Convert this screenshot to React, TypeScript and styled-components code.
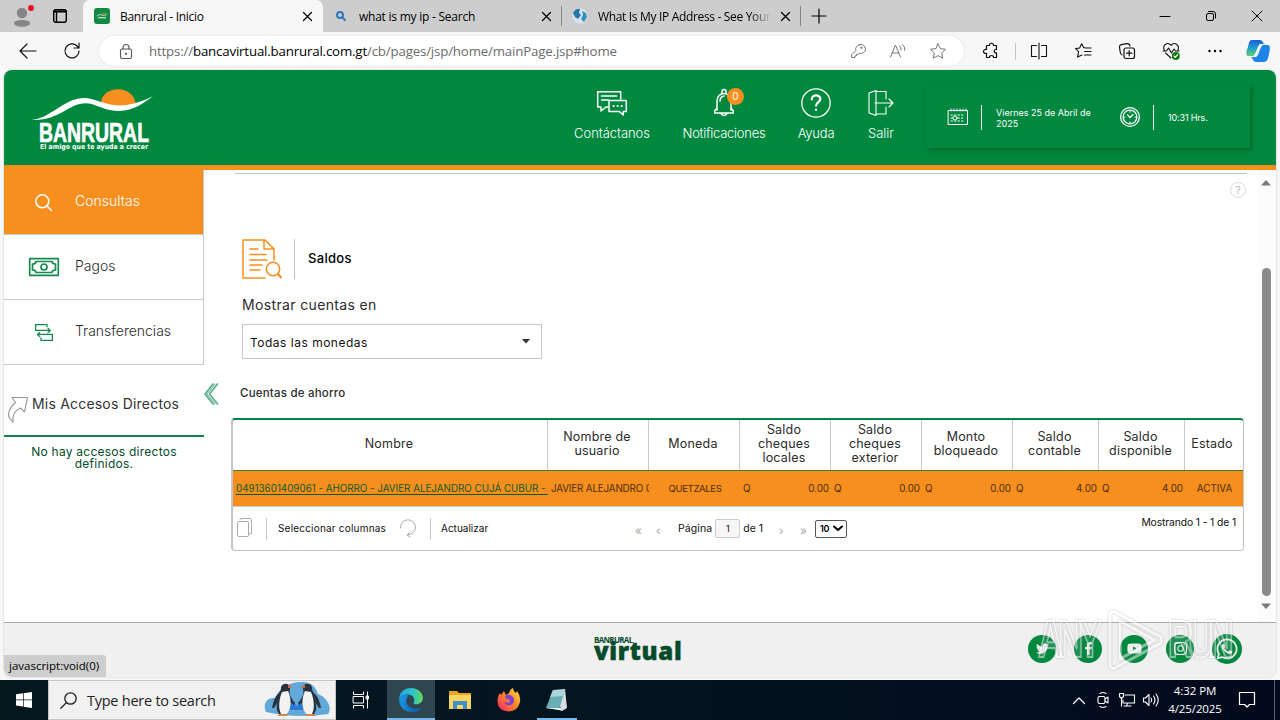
import React from "react";
import styled, { createGlobalStyle, css } from "styled-components";
import { FaTwitter, FaFacebookF, FaYoutube, FaInstagram, FaWhatsapp } from "react-icons/fa";

const green = "#00883f";
const orange = "#f78f1e";
const ui = `"Open Sans", "Noto Sans", sans-serif`;
const web = `Inter, "Open Sans", sans-serif`;

const Global = createGlobalStyle`
  * { box-sizing: border-box; }
  body { margin: 0; background: #f7f7f7; }
  svg { display: block; flex: none; }
`;

const Text = styled.span<{ $s: number; $w?: number; $ls?: number; $c?: string }>`
  font-size: ${(p) => p.$s}px;
  font-weight: ${(p) => p.$w ?? 400};
  letter-spacing: ${(p) => p.$ls ?? 0}px;
  ${(p) => p.$c && css`color: ${p.$c};`}
  white-space: nowrap;
`;

const Line = styled.svg`
  fill: none;
  stroke: currentColor;
  stroke-linecap: round;
  stroke-linejoin: round;
  overflow: visible;
`;

const Desktop = styled.div`
  width: 1280px;
  height: 720px;
  display: flex;
  flex-direction: column;
  overflow: hidden;
  background: #f7f7f7;
  font-family: ${ui};
  color: #111;
`;

/* Browser chrome */
const TabBar = styled.div`
  height: 32px;
  display: flex;
  background: #cdcdcd;
  color: #000;
`;
const Profile = styled.div`
  width: 83px;
  display: flex;
  align-items: center;
  gap: 18px;
  padding-left: 13px;
  border-radius: 0 0 7px 0;
`;
const Tab = styled.div<{ $active?: boolean; $w: number; $pad: number; $gap?: number }>`
  width: ${(p) => p.$w}px;
  height: 32px;
  padding: 0 ${(p) => (p.$active ? 11 : 10)}px 0 ${(p) => p.$pad}px;
  display: flex;
  align-items: center;
  gap: ${(p) => p.$gap ?? 10}px;
  background: ${(p) => (p.$active ? "#f7f7f7" : "#cdcdcd")};
  border-left: ${(p) => (p.$active ? "1px solid #f7f7f7" : "0")};
  border-radius: ${(p) => (p.$active ? "7px 7px 0 0" : "0 0 0 6px")};
`;
const TabTitle = styled(Text)<{ $fade?: boolean }>`
  flex: 1;
  overflow: hidden;
  ${(p) => p.$fade && css`mask-image: linear-gradient(90deg, #000 88%, transparent);`}
`;
const TabDivider = styled.div`
  width: 1px;
  height: 20px;
  margin-top: 6px;
  background: #858585;
`;
const NewTab = styled.div`
  width: 35px;
  display: grid;
  place-items: center;
`;
const WindowButtons = styled.div`
  margin-left: auto;
  display: grid;
  grid-template-columns: repeat(3, 46px);
  place-items: center;
`;
const Toolbar = styled.div`
  height: 38px;
  display: flex;
  align-items: center;
  padding-left: 6px;
`;
const Slot = styled.div<{ $w?: number; $c?: string }>`
  width: ${(p) => p.$w ?? 44}px;
  display: flex;
  justify-content: center;
  align-items: center;
  flex: none;
  color: ${(p) => p.$c ?? "inherit"};
`;
const Omnibox = styled.div`
  width: 865px;
  height: 30px;
  margin: 0 5px;
  padding: 0 6px 0 15px;
  display: flex;
  align-items: center;
  border-radius: 15px;
  background: #fff;
  box-shadow: 0 0 2px #d8d8d8;
`;
const Url = styled(Text)`
  flex: 1;
  margin-left: 11px;
  color: #6b6b6b;
  b { font-weight: 400; color: #000; }
`;
const ToolDivider = styled.div`
  width: 1px;
  height: 17px;
  margin: 0 1px 0 2px;
  background: #c4c4c4;
`;

/* Banking page */
const Page = styled.div`
  position: relative;
  height: 607px;
  margin: 0 4px 3px;
  display: flex;
  flex-direction: column;
  border-radius: 8px;
  overflow: hidden;
  background: #fff;
  box-shadow: 0 0 2px #bbb;
  font-family: ${web};
  color: #2b2b2b;
`;
const Header = styled.header`
  height: 100px;
  display: flex;
  flex: none;
  background: ${green};
  border-bottom: 5px solid ${orange};
  color: #fff;
`;
const Brand = styled.div`
  width: 557px;
  padding: 16px 0 0 26px;
`;
const NavItem = styled.div<{ $w: number }>`
  position: relative;
  width: ${(p) => p.$w}px;
  padding-top: 17px;
  display: flex;
  flex-direction: column;
  align-items: center;
  gap: 5px;
  line-height: 18px;
`;
const NavIcon = styled.div`
  position: relative;
  height: 32px;
  display: grid;
  place-items: center;
`;
const Badge = styled.span`
  position: absolute;
  left: 13px;
  top: 1px;
  width: 17px;
  height: 17px;
  border-radius: 50%;
  background: ${orange};
  font-size: 10px;
  line-height: 17px;
  text-align: center;
`;
const Clock = styled.div`
  width: 324px;
  height: 62px;
  margin: 16px 26px 0 auto;
  padding-left: 22px;
  display: flex;
  align-items: center;
  box-shadow: 2px 2px 4px rgba(0, 60, 25, 0.45);
  line-height: 11px;
`;
const ClockRule = styled.div`
  width: 1px;
  height: 25px;
  margin: 0 14px 0 13px;
  background: #e8f5ee;
`;
const DateText = styled.div`
  width: 124px;
  padding-top: 2px;
  font-size: 9px;
`;
const Body = styled.div`
  height: 452px;
  display: flex;
`;
const Sidebar = styled.aside`
  width: 200px;
  flex: none;
`;
const MenuItem = styled.div<{ $active?: boolean }>`
  height: 65px;
  display: flex;
  align-items: center;
  background: ${(p) => (p.$active ? orange : "#fff")};
  color: ${(p) => (p.$active ? "#fff" : "#2b2b2b")};
  border-right: 1px solid #c9c9c9;
  border-bottom: 1px solid #c9c9c9;
  padding-bottom: 3px;
`;
const MenuIcon = styled.div<{ $active?: boolean }>`
  width: 71px;
  padding: 3px 0 0 8px;
  display: grid;
  place-items: center;
  color: ${(p) => (p.$active ? "#fff" : "#17894c")};
`;
const Shortcuts = styled.div`
  height: 72px;
  display: flex;
  align-items: center;
  gap: 3px;
  padding: 6px 0 0 3px;
  border-bottom: 2px solid #12824a;
  color: #999;
  svg { margin-top: 14px; }
`;
const EmptyNote = styled.div`
  padding-top: 8px;
  text-align: center;
  line-height: 11px;
  color: #064a2c;
`;
const Collapse = styled.div`
  width: 14px;
  padding-top: 213px;
  color: #5eb08a;
`;
const Main = styled.main`
  width: 1040px;
  padding-left: 13px;
`;
const TopRule = styled.div`
  height: 4px;
  margin: 0 11px 0 4px;
  border-bottom: 1px solid #b9c9c4;
`;
const HelpRow = styled.div`
  height: 65px;
  padding: 8px 12px 0 0;
  display: flex;
  justify-content: flex-end;
`;
const Help = styled.div`
  width: 16px;
  height: 16px;
  border: 1px solid #ddd;
  border-radius: 50%;
  text-align: center;
  font-size: 11px;
  line-height: 14px;
  color: #bbb;
`;
const TitleRow = styled.div`
  height: 40px;
  padding-left: 11px;
  display: flex;
  align-items: center;
  color: ${orange};
  span { margin-bottom: 2px; }
`;
const TitleRule = styled.div`
  width: 1px;
  height: 40px;
  margin: 0 13px 0 11px;
  background: #c4c4c4;
`;
const FieldLabel = styled.div`
  padding: 15px 0 0 11px;
  height: 45px;
  line-height: 20px;
`;
const Select = styled.div`
  width: 300px;
  height: 35px;
  margin-left: 11px;
  padding: 0 11px 0 7px;
  display: flex;
  align-items: center;
  justify-content: space-between;
  border: 1px solid #c6c6c6;
  color: #111;
  span { padding-top: 2px; }
`;
const SectionLabel = styled.div`
  height: 59px;
  padding: 22px 0 0 9px;
  line-height: 20px;
`;
const Table = styled.div`
  width: 1013px;
  height: 133px;
  border: 2px solid #c3c3c3;
  border-top-color: #08834a;
  border-bottom-width: 1px;
  border-left-width: 2px;
  border-right-width: 1px;
  border-radius: 4px;
`;
const Row = styled.div`
  display: grid;
  grid-template-columns: 315px 101px repeat(4, 91px) 86px 86px 58px;
`;
const HeadRow = styled(Row)`
  height: 51px;
  border-bottom: 1px solid #3b7d2c;
`;
const HeadCell = styled.div`
  display: flex;
  align-items: center;
  justify-content: center;
  padding: 0 4px 2px 2px;
  text-align: center;
  line-height: 14px;
  border-right: 1px solid #cacaca;
  &:last-child { border-right: 0; padding-right: 6px; }
  span { white-space: pre-line; }
`;
const DataRow = styled(Row)`
  height: 36px;
  background: ${orange};
  border-bottom: 1px solid #c9c9c9;
  color: #4a2d0a;
  line-height: 36px;
`;
const DataCell = styled.div<{ $align?: string }>`
  padding: 0 2px 0 3px;
  overflow: hidden;
  white-space: nowrap;
  display: flex;
  justify-content: ${(p) => p.$align ?? "flex-start"};
`;
const AccountLink = styled(Text)`
  color: #0b5a2b;
  text-decoration: underline;
  text-underline-offset: 2px;
`;
const TableFoot = styled.div`
  height: 43px;
  display: flex;
  align-items: center;
  padding-left: 4px;
  color: #111;
`;
const FootRule = styled.div`
  width: 1px;
  height: 22px;
  background: #c9c9c9;
`;
const FootTool = styled.div<{ $w: number }>`
  width: ${(p) => p.$w}px;
  padding-bottom: 2px;
  color: #aaa;
`;
const FootText = styled.div<{ $w: number; $pad: number }>`
  width: ${(p) => p.$w}px;
  padding: 0 0 5px ${(p) => p.$pad}px;
`;
const Pager = styled.div`
  display: flex;
  align-items: center;
  margin-left: 99px;
`;
const Arrow = styled.div<{ $w: number }>`
  width: ${(p) => p.$w}px;
  color: #aaa;
`;
const PageBox = styled.div`
  width: 25px;
  height: 19px;
  margin: 0 3px;
  border: 1px solid #ccc;
  border-radius: 2px;
  background: #f6f6f6;
  font-size: 9px;
  line-height: 17px;
  text-align: center;
`;
const PageSize = styled.div`
  width: 32px;
  height: 18px;
  padding: 0 4px;
  display: flex;
  align-items: center;
  justify-content: space-between;
  border: 1px solid #555;
  border-radius: 2px;
  color: #000;
`;
const Showing = styled.div`
  margin: 0 7px 17px auto;
`;
const Scroll = styled.div`
  width: 18px;
  margin-left: auto;
  padding: 10px 2px 12px 0;
  display: flex;
  flex-direction: column;
  align-items: center;
  background: #fcfcfc;
  color: #7a7a7a;
`;
const Thumb = styled.div`
  width: 9px;
  height: 328px;
  margin: 82px 0 7px;
  border-radius: 5px;
  background: #8a8a8a;
`;
const Footer = styled.footer`
  height: 55px;
  display: flex;
  border-top: 1px solid #aaa;
  background: #f0f0f0;
`;
const VirtualLogo = styled.div`
  width: 434px;
  padding: 12px 0 0 590px;
  box-sizing: content-box;
  display: flex;
  flex-direction: column;
  font-family: "Open Sans", sans-serif;
  color: #064a2c;
`;
const LogoSmall = styled(Text)`
  line-height: 9px;
  height: 7px;
`;
const LogoBig = styled(Text)`
  line-height: 18px;
  -webkit-text-stroke: 0.5px #064a2c;
`;
const Social = styled.div`
  display: flex;
  align-items: center;
  gap: 18px;
  height: 51px;
`;
const SocialButton = styled.div<{ $d?: number }>`
  width: ${(p) => p.$d ?? 28}px;
  height: ${(p) => p.$d ?? 28}px;
  display: grid;
  place-items: center;
  border-radius: 50%;
  background: ${green};
  color: #f1f1f1;
`;
const StatusBubble = styled.div`
  position: absolute;
  left: 0;
  bottom: 0;
  width: 102px;
  height: 22px;
  padding-left: 5px;
  border-radius: 0 3px 0 8px;
  background: #cdcdcd;
  line-height: 19px;
  font-family: ${ui};
  color: #000;
`;
const Watermark = styled.div`
  position: absolute;
  left: 1034px;
  top: 539px;
  display: flex;
  align-items: center;
  gap: 4px;
  opacity: 0.5;
  filter: drop-shadow(0 0 1px #888);
`;
const MarkWord = styled.span<{ $w: number }>`
  width: ${(p) => p.$w}px;
  font: 700 51px/60px "Liberation Sans", sans-serif;
  letter-spacing: -7px;
  transform: scaleX(0.68);
  transform-origin: left;
  color: rgba(245, 245, 245, 0.15);
  -webkit-text-stroke: 2px #fff;
`;

/* Windows taskbar */
const Taskbar = styled.div`
  height: 40px;
  display: flex;
  background: linear-gradient(90deg, #04181e, #041420 45%, #020a1c);
  color: #fff;
`;
const TaskButton = styled.div<{ $w: number; $active?: boolean; $open?: boolean }>`
  width: ${(p) => p.$w}px;
  height: 40px;
  display: grid;
  place-items: center;
  background: ${(p) => (p.$active ? "#30464e" : "transparent")};
  ${(p) => (p.$active || p.$open) && css`
    background-image: linear-gradient(#76b9ed, #76b9ed);
    background-repeat: no-repeat;
    background-position: center bottom;
    background-size: ${p.$active ? 48 : 40}px 2px;
  `}
`;
const SearchBox = styled.div`
  width: 288px;
  display: flex;
  align-items: center;
  justify-content: space-between;
  padding: 0 5px 0 11px;
  background: #f1f1f1;
  border: 1px solid #c4c4c4;
  color: #222;
`;
const SearchHint = styled.div`
  display: flex;
  align-items: center;
  gap: 10px;
`;
const Tray = styled.div`
  margin-left: auto;
  padding-right: 5px;
  display: flex;
  align-items: center;
`;
const TrayClock = styled.div`
  width: 64px;
  display: flex;
  flex-direction: column;
  align-items: center;
  line-height: 18px;
`;
const TrayEdge = styled.div`
  width: 1px;
  height: 40px;
  background: #56616b;
`;

const Close = () => (
  <Line width="9" height="9" viewBox="0 0 9 9" strokeWidth="1.2"><path d="M.5.5l8 8M8.5.5l-8 8" /></Line>
);

const BanruralLogo = () => (
  <svg width="124" height="66" viewBox="0 0 124 66">
    <path d="M71 17C72-1 104-2 106 19q-15 7-35-2z" fill={orange} />
    <path d="M1 34C20 33 34 12 54 12c17 0 30 18 69-2-24 20-41 16-56 10C42 9 34 36 1 34z" fill="#fff" />
    <text x="9" y="56" textLength="110" lengthAdjust="spacingAndGlyphs" fontFamily="Liberation Sans" fontWeight="700" fontSize="27" fill="#fff" stroke="#fff" strokeWidth=".7">BANRURAL</text>
    <text x="10" y="63" textLength="108" lengthAdjust="spacingAndGlyphs" fontFamily="DejaVu Sans" fontWeight="700" fontSize="7" fill="#fff">El amigo que te ayuda a crecer</text>
  </svg>
);

const Penguin = () => (
  <>
    <path d="M17 6c2-5 9-4 9 1 0 3-1 4 0 7 2 4 3 6 5 8l-1 2-5-4c1 6 0 12-3 14h-6c-4-4-4-9-2-13l-4 6-2 0c1-6 3-11 6-14 3-3 3-5 3-7z" fill="#28333e" />
    <path d="M18 11l6-1c4 8 3 18-1 23h-6c-3-6-2-15 1-22z" fill="#f2f2f2" />
    <path d="M24 4l5 2-5 1z" fill="#e8683a" />
    <path d="M13 35h11l-2-2h-6z" fill="#dd8448" />
  </>
);

const Penguins = () => (
  <svg width="66" height="38" viewBox="0 0 66 38">
    <path d="M2 31c-4-9 2-15 9-14C16 5 29 0 39 1c8 0 13 5 15 12 11 4 14 16 10 20Q33 38 2 31z" fill="#62a8d9" />
    <path d="M26 19l7 6 6-6v10H26z" fill="#2c78d3" />
    <Penguin />
    <g transform="matrix(-1 0 0 1 65 0)"><Penguin /></g>
  </svg>
);

const EdgeLogo = () => (
  <svg width="26" height="26" viewBox="0 0 24 24">
    <defs>
      <linearGradient id="edgeTop" x1="0" x2="1"><stop offset="0" stopColor="#24a7e8" /><stop offset=".6" stopColor="#2fc4c8" /><stop offset="1" stopColor="#63dc50" /></linearGradient>
      <linearGradient id="edgeLow" x1="0" x2="1" y1="0" y2="1"><stop offset="0" stopColor="#1b93dc" /><stop offset="1" stopColor="#0b55a8" /></linearGradient>
    </defs>
    <path d="M1 12C1 5 6 1 12 1c7 0 11 5 11 9 0 4-3 6-6 6-4 0-2-2-2-4 0-3-3-5-6-5-4 0-7 2-8 5z" fill="url(#edgeTop)" />
    <path d="M1 12c0-4 5-6 9-4-3 1-4 4-4 6 0 5 4 9 9 9C8 24 1 19 1 12z" fill="#168ddc" />
    <path d="M10 8c-4 3-3 9 2 11 4 2 8 1 10-1-2 4-6 6-9 5-5-1-8-5-8-9 0-3 2-5 5-6z" fill="url(#edgeLow)" />
  </svg>
);

const columns = ["Nombre", "Nombre de\nusuario", "Moneda", "Saldo\ncheques\nlocales", "Saldo\ncheques\nexterior", "Monto\nbloqueado", "Saldo\ncontable", "Saldo\ndisponible", "Estado"];
const amounts = ["0.00", "0.00", "0.00", "4.00", "4.00"];

function BrowserTabs() {
  return (
    <TabBar>
      <Profile>
        <svg width="22" height="24" viewBox="0 0 22 24">
          <circle cx="9" cy="9" r="5.2" fill="#858585" />
          <path d="M1 19c0-4 16-4 16 0 0 5-16 5-16 0z" fill="#858585" />
          <circle cx="18" cy="4" r="3" fill="#e81123" />
        </svg>
        <Line width="14" height="14" viewBox="0 0 14 14" strokeWidth="1.4"><rect x=".7" y=".7" width="12.6" height="12.6" rx="2" /><path d="M1 2.500h12" strokeWidth="2" /><path d="M3.500 3v10" /></Line>
      </Profile>
      <Tab $active $w={240} $pad={10}>
        <svg width="16" height="16" viewBox="0 0 16 16"><rect width="16" height="16" rx="3" fill="#128a43" /><path d="M3 8q3-2.500 5-1t5-1" stroke="#fff" strokeWidth=".7" fill="none" /><path d="M8 6.300q2-2 4 0z" fill={orange} /><path d="M4 9.700h8" stroke="#c6e2ce" strokeWidth="1.300" /></svg>
        <TabTitle $s={12} $ls={-0.28}>Banrural - Inicio</TabTitle>
        <Close />
      </Tab>
      <Tab $w={238} $pad={13} $gap={13}>
        <Line width="10" height="10" viewBox="0 0 10 10" strokeWidth="2" color="#2f79bd"><circle cx="4" cy="4" r="3" /><path d="M6.4 6.4L9 9" /></Line>
        <TabTitle $s={12} $ls={-0.24}>what is my ip - Search</TabTitle>
        <Close />
      </Tab>
      <TabDivider />
      <Tab $w={238} $pad={10}>
        <svg width="16" height="16" viewBox="0 0 16 16"><circle cx="8" cy="8" r="7.5" fill="#d9e6ee" /><path d="M1 5q3-5 7-4l-1 4 2 2-3 4-3-2z" fill="#2478a9" /><path d="M10 3l4 2 1 4-3 5-3-3 2-4z" fill="#3391bd" /></svg>
        <TabTitle $s={12} $ls={-0.33} $fade>What Is My IP Address - See Your</TabTitle>
        <Close />
      </Tab>
      <TabDivider />
      <NewTab><Line width="14" height="14" viewBox="0 0 14 14" strokeWidth="1.2"><path d="M7 0v14M0 7h14" /></Line></NewTab>
      <WindowButtons>
        <Line width="10" height="10" viewBox="0 0 10 10"><path d="M0 5.5h10" /></Line>
        <Line width="10" height="10" viewBox="0 0 10 10"><rect x=".5" y="2.5" width="7" height="7" rx="1.5" /><path d="M2.5.5H7a2.500 2.500 0 0 1 2.500 2.500V7" /></Line>
        <Line width="10" height="10" viewBox="0 0 10 10"><path d="M0 0l10 10M10 0L0 10" /></Line>
      </WindowButtons>
    </TabBar>
  );
}

function BrowserToolbar() {
  return (
    <Toolbar>
      <Slot><Line width="16" height="14" viewBox="0 0 16 14" strokeWidth="1.2"><path d="M16 7H0M7 0L0 7l7 7" /></Line></Slot>
      <Slot><Line width="16" height="16" viewBox="0 0 16 16" strokeWidth="1.2"><path d="M15 8a7 7 0 1 1-2-5l2 2M15 0v5h-5" /></Line></Slot>
      <Omnibox>
        <Slot $w={24} $c="#555"><Line width="12" height="15" viewBox="0 0 12 15" strokeWidth="1.1"><rect x=".5" y="5" width="11" height="9.500" rx="1.500" /><path d="M3 5V3.500a3 3 0 0 1 6 0V5" /><circle cx="6" cy="9.800" r=".6" fill="currentColor" /></Line></Slot>
        <Url $s={13.300} $ls={-0.18}>https://<b>bancavirtual.banrural.com.gt</b>/cb/pages/jsp/home/mainPage.jsp#home</Url>
        <Slot $w={40} $c="#777"><Line width="14" height="14" viewBox="0 0 14 14"><path d="M8.500.600a4.600 4.600 0 1 1-.2 8.700l-1.300 1H5.500v1.500H4v1.600H.6v-2.600l4.200-4.300A4.600 4.600 0 0 1 8.500.6z" /><circle cx="10.300" cy="3.800" r=".7" /></Line></Slot>
        <Slot $w={40} $c="#777"><Line width="16" height="14" viewBox="0 0 16 14"><path d="M.5 13L5.500 1l5 12M2.200 9h6.600M9.500 2q2 1.500 1.600 4M12.500.500q2.800 2 2.400 6" /></Line></Slot>
        <Slot $w={40} $c="#777"><Line width="16" height="16" viewBox="0 0 16 16"><path d="M8 .8l2.300 4.800 5.200.7-3.800 3.600.9 5.200L8 12.600l-4.600 2.500.9-5.200L.5 6.300l5.200-.7z" /></Line></Slot>
      </Omnibox>
      <Slot><Line width="16" height="16" viewBox="0 0 16 16" strokeWidth="1.200"><path d="M3.500 2.500h3c-.4-3 4.400-3 4 0h3v4c-3-.5-3 3.800 0 3.300v4.700h-3c.4-2.700-4.400-2.700-4 0h-3v-4.200c-4 .8-4-4.600 0-3.800z" /></Line></Slot>
      <ToolDivider />
      <Slot><Line width="16" height="16" viewBox="0 0 16 16" strokeWidth="1.100"><path d="M5.500 2.500h-5v11h5M10.500 2.500h5v11h-5M8 0v16" /></Line></Slot>
      <Slot><Line width="17" height="16" viewBox="0 0 17 16" strokeWidth="1.100"><path d="M10 4.800L8.600 4.600 6.700.8 4.600 5l-4 .6 3 3-1 5.500L7 12M10.500 5H16M9.500 8.500H16M9.500 12H16" /></Line></Slot>
      <Slot><Line width="16" height="16" viewBox="0 0 16 16" strokeWidth="1.200"><rect x="5" y="5" width="10.500" height="10.500" rx="2" /><path d="M10.200 7.500v5.500M7.500 10.200H13M3 12Q1.500 11.500 1.200 9L.5 4Q.4 2.200 2.200 1.700L8 .6Q10.500.4 11 3" /></Line></Slot>
      <Slot><Line width="17" height="17" viewBox="0 0 17 17" strokeWidth="1.100"><path d="M1.300 7C-1 1.500 5-1.500 8 2.400c3-4 9-.8 7 4.600M0 8h3.500L5.500 5l3 5L11 6l1.500 2H16M2.500 10L8 15" /><circle cx="12.800" cy="13" r="4" fill="#107c10" stroke="none" /><path d="M11 13l1.300 1.300 2.400-2.600" stroke="#fff" /></Line></Slot>
      <Slot><svg width="14" height="4" viewBox="0 0 14 4"><circle cx="1.500" cy="2" r="1.200" /><circle cx="7" cy="2" r="1.200" /><circle cx="12.500" cy="2" r="1.200" /></svg></Slot>
      <Slot $w={42}>
        <svg width="24" height="22" viewBox="0 0 24 22">
          <defs><linearGradient id="cop" x2="0" y2="1"><stop stopColor="#1c5fd0" /><stop offset=".5" stopColor="#1d9fd0" /><stop offset="1" stopColor="#64d06a" /></linearGradient></defs>
          <path d="M6 0h8c3 0 3 4 5 4h-5c-3 2-4 11-7 12H3c-4 0-3-4-1-9 1-4 1-7 4-7z" fill="url(#cop)" />
          <path d="M18 22h-8c-3 0-3-4-5-5h5c3-1 4-11 7-12h4c4 0 3 4 2 9s-2 8-5 8z" fill="#1e83ea" />
        </svg>
      </Slot>
    </Toolbar>
  );
}

function BankHeader() {
  return (
    <Header>
      <Brand><BanruralLogo /></Brand>
      <NavItem $w={102}>
        <NavIcon><Line width="30" height="25" viewBox="0 0 30 25" strokeWidth="1.500"><path d="M11 16H9l-5 4v-4H.7V.700h23V8M4.500 5h15M4.500 9h7" /><path d="M12 9.500h17.300v11h-3v3.500l-4-3.500H12z" /><path d="M16.500 15h.3M20.500 15h.3M24.500 15h.3" strokeWidth="1.800" /></Line></NavIcon>
        <Text $s={13} $w={300} $ls={-0.05}>Contáctanos</Text>
      </NavItem>
      <NavItem $w={122}>
        <NavIcon><Line width="20" height="28" viewBox="0 0 20 28" strokeWidth="1.500"><path d="M8 4V2.500a2 2 0 0 1 4 0V4M3 21v-9c0-10 14-10 14 0v9M3 19L.7 22v2h18.600v-2L17 19M7 24.500q3 4 6 0M6 12q0-4 4-5" /></Line><Badge>0</Badge></NavIcon>
        <Text $s={13} $w={300} $ls={-0.25}>Notificaciones</Text>
      </NavItem>
      <NavItem $w={62}>
        <NavIcon><Line width="30" height="30" viewBox="0 0 30 30" strokeWidth="1.300"><circle cx="15" cy="15" r="14.200" /><path d="M10.800 11.500c0-6 8.700-5 8.500-.4-.1 3-4.200 3.200-4.200 6.600M15 21.500v.5" strokeWidth="2.200" /></Line></NavIcon>
        <Text $s={13} $w={300} $ls={-0.2}>Ayuda</Text>
      </NavItem>
      <NavItem $w={68}>
        <NavIcon><Line width="26" height="26" viewBox="0 0 26 26" strokeWidth="1.100"><path d="M1 3l7-2.500v25L1 23zM8 1.500h10V9M8 24h10v-7M7 13h18M21 9l4 4-4 4" /></Line></NavIcon>
        <Text $s={13} $w={300}>Salir</Text>
      </NavItem>
      <Clock>
        <Line width="20" height="16" viewBox="0 0 20 16"><rect x=".5" y="1.500" width="19" height="14" /><path d="M3 0v2M6 0v2M9 0v2M12 0v2M15 0v2M18 0v2" /><path d="M3 6h14M3 9h14M3 12h14" strokeDasharray="1.500 2" /><circle cx="7" cy="9" r="2" fill={green} /></Line>
        <ClockRule />
        <DateText><Text $s={9} $ls={0}>Viernes 25 de Abril de<br />2025</Text></DateText>
        <Line width="20" height="20" viewBox="0 0 20 20"><circle cx="10" cy="10" r="9.400" strokeWidth="1.300" /><circle cx="10" cy="10" r="6.900" strokeWidth="1.300" /><path d="M7.500 7.800L10 10.500l3-3M10 4.500v.5M10 15v.5M4.500 10H5M15 10h.5" strokeWidth="1.200" /></Line>
        <ClockRule />
        <Text $s={9} $ls={-0.15}>10:31 Hrs.</Text>
      </Clock>
    </Header>
  );
}

function Menu() {
  return (
    <Sidebar>
      <MenuItem $active>
        <MenuIcon $active><Line width="17" height="17" viewBox="0 0 17 17" strokeWidth="1.500"><circle cx="7.300" cy="7.300" r="6.500" /><path d="M12 12l4.500 4.500" /></Line></MenuIcon>
        <Text $s={14} $w={300}>Consultas</Text>
      </MenuItem>
      <MenuItem>
        <MenuIcon><Line width="30" height="18" viewBox="0 0 30 18" strokeWidth="1.700"><rect x=".7" y=".7" width="28.600" height="16.600" /><path d="M7 3.500h16q0 2.500 3.500 2.500v6q-3.500 0-3.500 2.500H7q0-2.500-3.500-2.500V6Q7 6 7 3.500z" /><circle cx="15" cy="9" r="3" /></Line></MenuIcon>
        <Text $s={14} $w={300}>Pagos</Text>
      </MenuItem>
      <MenuItem>
        <MenuIcon><Line width="18" height="17" viewBox="0 0 18 17" strokeWidth="1.300"><path d="M12 2.500V.6H.6v5.800H15M13 4.300l2.300 2.100L13 8.500M6 14v2.400h11.400v-6H2.500M4.700 8.500l-2.300 2 2.300 2" /></Line></MenuIcon>
        <Text $s={14} $w={300}>Transferencias</Text>
      </MenuItem>
      <Shortcuts>
        <Line width="22" height="28" viewBox="0 0 22 28" strokeWidth="1.200"><path d="M5 1.500h15.500l-3 14.500-4-4q-9 4-7.500 14Q-4 18 8.500 6.500z" /></Line>
        <Text $s={14} $ls={0.2} $c="#333">Mis Accesos Directos</Text>
      </Shortcuts>
      <EmptyNote><Text $s={12} $ls={0.25}>No hay accesos directos<br />definidos.</Text></EmptyNote>
    </Sidebar>
  );
}

function AccountsTable() {
  return (
    <Table>
      <HeadRow>{columns.map((c) => <HeadCell key={c}><Text $s={12.500} $ls={0.2}>{c}</Text></HeadCell>)}</HeadRow>
      <DataRow>
        <DataCell><AccountLink $s={9.800}>04913601409061 - AHORRO - JAVIER ALEJANDRO CUJÁ CUBUR - QUETZALES</AccountLink></DataCell>
        <DataCell><Text $s={9.800} $ls={-0.15}>JAVIER ALEJANDRO CUJÁ</Text></DataCell>
        <DataCell $align="center"><Text $s={9.600} $ls={-0.4}>QUETZALES</Text></DataCell>
        {amounts.map((a, i) => (
          <DataCell key={i} $align="space-between"><Text $s={9.800}>Q</Text><Text $s={9.800}>{a}</Text></DataCell>
        ))}
        <DataCell $align="center"><Text $s={9.800}>ACTIVA</Text></DataCell>
      </DataRow>
      <TableFoot>
        <FootTool $w={29}><Line width="15" height="19" viewBox="0 0 15 19"><rect x=".5" y="3.500" width="11" height="15" rx="1" /><path d="M3 1.500Q3 .5 4 .5h9.500q1 0 1 1V15q0 1-1 1H12" /></Line></FootTool>
        <FootRule />
        <FootText $w={133} $pad={11}><Text $s={10} $ls={0.2}>Seleccionar columnas</Text></FootText>
        <FootTool $w={30}><Line width="16" height="18" viewBox="0 0 16 18"><path d="M.5 9A7.500 7.500 0 1 1 8 15.800M10 13l-3 3 3 2" /></Line></FootTool>
        <FootRule />
        <FootText $w={105} $pad={10}><Text $s={10}>Actualizar</Text></FootText>
        <Pager>
          <Arrow $w={21}><Text $s={12}>«</Text></Arrow>
          <Arrow $w={22}><Text $s={12}>‹</Text></Arrow>
          <Text $s={10.500} $ls={0.1}>Página</Text>
          <PageBox>1</PageBox>
          <Text $s={10.500}>de 1</Text>
          <Slot $w={16} />
          <Arrow $w={21}><Text $s={12}>›</Text></Arrow>
          <Arrow $w={15}><Text $s={12}>»</Text></Arrow>
          <PageSize><Text $s={9} $w={600} $ls={-0.500}>10</Text><Line width="8" height="5" viewBox="0 0 8 5" strokeWidth="2"><path d="M0 .5l4 3.500 4-3.500" /></Line></PageSize>
        </Pager>
        <Showing><Text $s={10.300} $ls={-0.1}>Mostrando 1 - 1 de 1</Text></Showing>
      </TableFoot>
    </Table>
  );
}

function WindowsTaskbar() {
  return (
    <Taskbar>
      <TaskButton $w={48}><svg width="16" height="16" viewBox="0 0 16 16" fill="#fff"><path d="M0 2.300L7 1.300V7.600H0zM7.700 1.200L16 0v7.600H7.700zM0 8.300h7v6.300l-7-1zM7.700 8.300H16V16l-8.300-1.200z" /></svg></TaskButton>
      <SearchBox>
        <SearchHint>
          <Line width="17" height="17" viewBox="0 0 17 17" strokeWidth="1.300"><circle cx="10.500" cy="6.500" r="5.700" /><path d="M6.500 10.500L.8 16.200" /></Line>
          <Text $s={14.500} $ls={-0.25}>Type here to search</Text>
        </SearchHint>
        <Penguins />
      </SearchBox>
      <TaskButton $w={49}><Line width="16" height="16" viewBox="0 0 16 16"><path d="M.5 0v2.500h10V0M.5 16v-2.500h10V16M14.500 0v16" /><rect x=".5" y="4.500" width="10" height="6.500" /><rect x="13.500" y="4" width="2" height="3" fill="#fff" /></Line></TaskButton>
      <Slot $w={2} />
      <TaskButton $w={48} $active><EdgeLogo /></TaskButton>
      <TaskButton $w={49}><svg width="22" height="20" viewBox="0 0 22 20"><path d="M0 1h8l2 2h12v16H0z" fill="#e9a823" /><path d="M0 5h22v14H0z" fill="#fcd462" /><path d="M4 11h14v8h-4v-4H8v4H4z" fill="#3f8fcb" /></svg></TaskButton>
      <TaskButton $w={49}>
        <svg width="24" height="24" viewBox="0 0 24 24">
          <defs><linearGradient id="fox" x1="1" x2="0" y2="1"><stop stopColor="#ffe14a" /><stop offset=".45" stopColor="#ff8b24" /><stop offset="1" stopColor="#f0206a" /></linearGradient></defs>
          <path d="M3 5l1 2 3-4 2 4 3-2q1-4 4-5 0 3 3 5l1-2q4 5 3 11-2 9-11 9.500Q1 23 .5 14 .5 8 3 5z" fill="url(#fox)" />
          <path d="M8 8q4-3 8 1 3 5-2 8-5 1-7-3l5 1q2-2 0-4-3 1-4-3z" fill="#7a3fd6" />
        </svg>
      </TaskButton>
      <TaskButton $w={48} $open><svg width="24" height="24" viewBox="0 0 24 24"><path d="M8 2l12-1 2 19-5 3z" fill="#d9dfe0" /><path d="M8 2h12l-6 20L1 20z" fill="#6aaeb8" /><path d="M8 2h12l-2 6L5 9z" fill="#a9d4d9" /><path d="M1 20l13 2 3 1-1-3z" fill="#e9eef0" /></svg></TaskButton>
      <Tray>
        <Slot $w={24}><Line width="12" height="7" viewBox="0 0 12 7" strokeWidth="1.200"><path d="M.5 6.500L6 1l5.500 5.500" /></Line></Slot>
        <Slot $w={24}><Line width="12" height="16" viewBox="0 0 12 16" strokeWidth="1.100"><rect x="1" y="4.500" width="7" height="7" rx="1.500" /><path d="M8 7l3-2v6L8 9M3 1.500q3-2 6 0M3 14.500q3 2 6 0" /></Line></Slot>
        <Slot $w={24}><Line width="16" height="14" viewBox="0 0 16 14" strokeWidth="1.100"><path d="M6 2h9.500v8H4V7M8 10v3M5 13h7M.5.500h4v3l-2 2-2-2zM2.500 5.500V13" /></Line></Slot>
        <Slot $w={24}><Line width="16" height="14" viewBox="0 0 16 14" strokeWidth="1.100"><path d="M.5 5h2L6 1.500v11L2.500 9h-2zM8 5q1.500 2 0 4M10.500 3q3 4 0 8M13 1q4.500 6 0 12" /></Line></Slot>
        <TrayClock><Text $s={11.500} $ls={-0.05}>4:32 PM</Text><Text $s={11.500} $ls={-0.1}>4/25/2025</Text></TrayClock>
        <Slot $w={40}><Line width="16" height="16" viewBox="0 0 16 16" strokeWidth="1.200"><path d="M.5.500h15v12h-5L8 15l-2.500-2.500h-5z" /></Line></Slot>
        <Slot $w={7} />
        <TrayEdge />
      </Tray>
    </Taskbar>
  );
}

export default function App() {
  return (
    <Desktop>
      <Global />
      <BrowserTabs />
      <BrowserToolbar />
      <Page>
        <BankHeader />
        <Body>
          <Menu />
          <Collapse><Line width="14" height="22" viewBox="0 0 14 22" strokeWidth="1.800"><path d="M9 1L1 11l8 10M13.500 1l-8 10 8 10" /><path d="M11 1L3 11l8 10" strokeWidth="1" /></Line></Collapse>
          <Main>
            <TopRule />
            <HelpRow><Help>?</Help></HelpRow>
            <TitleRow>
              <Line width="41" height="40" viewBox="0 0 41 40" strokeWidth="1.500"><path d="M23 39H1V1h22l9 9v11M22 1v9h10M8 10h8M8 15.500h16M8 21h17M8 26h12M8 31h10" /><circle cx="31" cy="30" r="6.700" /><path d="M36 35l3 3.500" strokeWidth="2" /></Line>
              <TitleRule />
              <Text $s={13} $w={500} $ls={0.3} $c="#000">Saldos</Text>
            </TitleRow>
            <FieldLabel><Text $s={14} $ls={0.35}>Mostrar cuentas en</Text></FieldLabel>
            <Select><Text $s={12} $ls={0.500}>Todas las monedas</Text><svg width="8" height="5" viewBox="0 0 8 5"><path d="M0 0h8L4 4.500z" fill="#333" /></svg></Select>
            <SectionLabel><Text $s={11.500} $w={500} $ls={0.2}>Cuentas de ahorro</Text></SectionLabel>
            <AccountsTable />
          </Main>
          <Scroll>
            <svg width="10" height="6" viewBox="0 0 10 6"><path d="M5 0l5 5.500H0z" fill="currentColor" /></svg>
            <Thumb />
            <svg width="10" height="6" viewBox="0 0 10 6"><path d="M0 .5h10L5 6z" fill="currentColor" /></svg>
          </Scroll>
        </Body>
        <Footer>
          <VirtualLogo>
            <LogoSmall $s={8} $w={700} $ls={-0.7}>BANRURAL</LogoSmall>
            <LogoBig $s={24} $w={800} $ls={0.700}>virtual</LogoBig>
          </VirtualLogo>
          <Social>
            <SocialButton><FaTwitter size={13} /></SocialButton>
            <SocialButton><FaFacebookF size={13} /></SocialButton>
            <SocialButton><FaYoutube size={15} /></SocialButton>
            <SocialButton><FaInstagram size={15} /></SocialButton>
            <SocialButton $d={30}><FaWhatsapp size={24} /></SocialButton>
          </Social>
        </Footer>
        <StatusBubble><Text $s={11.500} $ls={0}>javascript:void(0)</Text></StatusBubble>
        <Watermark>
          <MarkWord $w={66}>ANY</MarkWord>
          <Line width="56" height="62" viewBox="0 0 56 62" color="#fff" strokeWidth="3"><path d="M5 2l48 26v6L5 60l-3-3V5zM12 12l34 19-34 19z" /></Line>
          <MarkWord $w={66}>RUN</MarkWord>
        </Watermark>
      </Page>
      <WindowsTaskbar />
    </Desktop>
  );
}
